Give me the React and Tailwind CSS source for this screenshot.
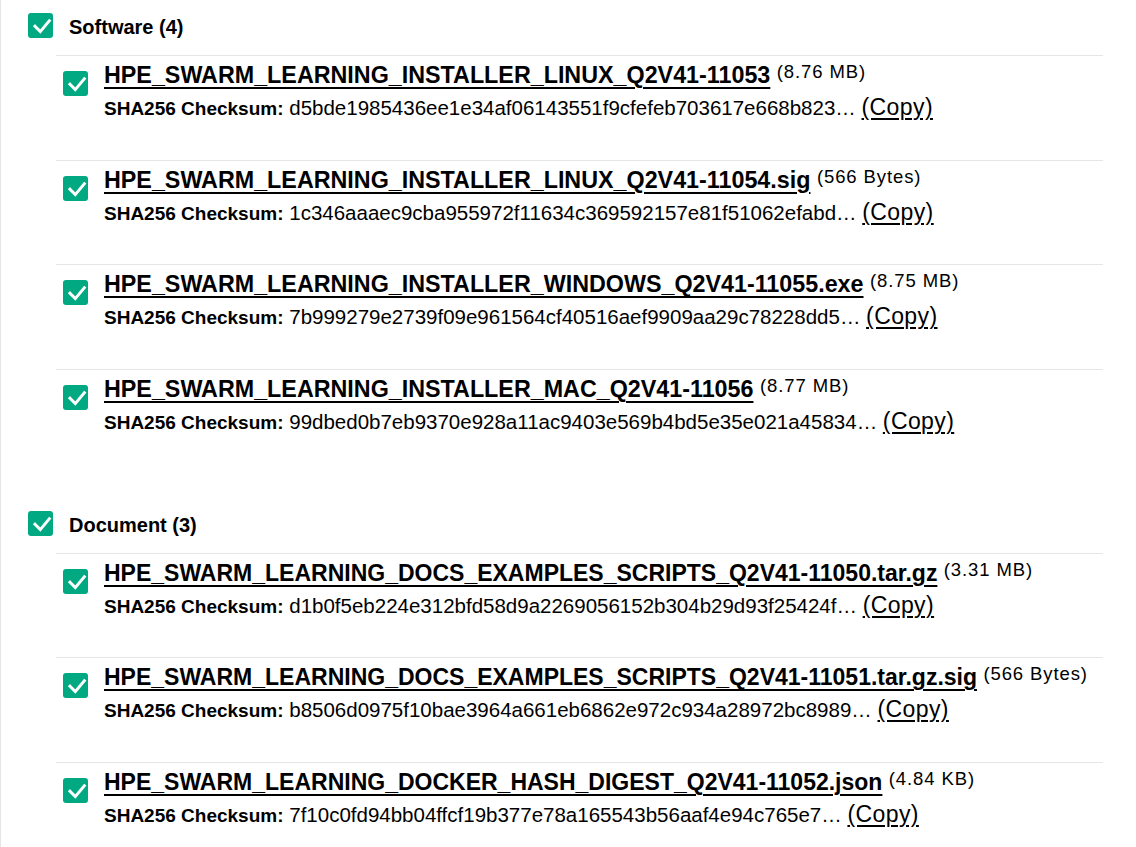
import React from 'react';

const groups = [
  {
    title: 'Software (4)',
    nameSize: 'text-[23.3px]',
    files: [
      { name: 'HPE_SWARM_LEARNING_INSTALLER_LINUX_Q2V41-11053', size: '8.76 MB', sha: 'd5bde1985436ee1e34af06143551f9cfefeb703617e668b823' },
      { name: 'HPE_SWARM_LEARNING_INSTALLER_LINUX_Q2V41-11054.sig', size: '566 Bytes', sha: '1c346aaaec9cba955972f11634c369592157e81f51062efabd' },
      { name: 'HPE_SWARM_LEARNING_INSTALLER_WINDOWS_Q2V41-11055.exe', size: '8.75 MB', sha: '7b999279e2739f09e961564cf40516aef9909aa29c78228dd5' },
      { name: 'HPE_SWARM_LEARNING_INSTALLER_MAC_Q2V41-11056', size: '8.77 MB', sha: '99dbed0b7eb9370e928a11ac9403e569b4bd5e35e021a45834' },
    ],
  },
  {
    title: 'Document (3)',
    nameSize: 'text-[23px]',
    files: [
      { name: 'HPE_SWARM_LEARNING_DOCS_EXAMPLES_SCRIPTS_Q2V41-11050.tar.gz', size: '3.31 MB', sha: 'd1b0f5eb224e312bfd58d9a2269056152b304b29d93f25424f' },
      { name: 'HPE_SWARM_LEARNING_DOCS_EXAMPLES_SCRIPTS_Q2V41-11051.tar.gz.sig', size: '566 Bytes', sha: 'b8506d0975f10bae3964a661eb6862e972c934a28972bc8989' },
      { name: 'HPE_SWARM_LEARNING_DOCKER_HASH_DIGEST_Q2V41-11052.json', size: '4.84 KB', sha: '7f10c0fd94bb04ffcf19b377e78a165543b56aaf4e94c765e7' },
    ],
  },
];

// green checked box
const CheckBox = ({ className = '' }) => (
  <span className={`flex h-[25px] w-[25px] shrink-0 items-center justify-center rounded-[3px] bg-[#01a982] ${className}`}>
    <svg width="25" height="25" viewBox="0 0 25 25" fill="none">
      <path d="M7 13.2 L12.3 18.6 L21.3 7.8" stroke="white" strokeWidth="3" strokeLinecap="square" strokeLinejoin="miter" />
    </svg>
  </span>
);

const FileRow = ({ file, nameSize }) => (
  <div className="flex items-start border-t border-[#e6e6e6] pt-[4px] pb-[39.67px] pl-[7px]">
    <CheckBox className="mt-[11px]" />
    <div className="ml-[16px]">
      <div className={`h-[30px] whitespace-nowrap leading-[30px] ${nameSize}`}>
        <a href="#" className="font-bold text-black underline decoration-2 underline-offset-[4px]">
          {file.name}
        </a>{' '}
        <span className="relative top-[2px] align-top text-[18.5px] leading-[20px] tracking-[0.9px] text-black">({file.size})</span>
      </div>
      <div className="mt-[4px] h-[26px] whitespace-nowrap text-[20.5px] leading-[26px] text-black">
        <span className="text-[19px] font-bold">SHA256 Checksum:</span> {file.sha}…{' '}
        <a href="#" className="text-[23px] tracking-[0.4px] underline decoration-[1.5px] underline-offset-[3px]">
          (Copy)
        </a>
      </div>
    </div>
  </div>
);

const Group = ({ group, first }) => (
  <section className={first ? '' : 'mt-[24px]'}>
    <div className="flex h-[55px] items-start pt-[13px] pl-[27px]">
      <CheckBox />
      <h2 className="ml-[16px] mt-[2px] text-[20px] font-bold leading-[25px] text-black">{group.title}</h2>
    </div>
    <div className="ml-[55px] w-[1047px]">
      {group.files.map((f) => (
        <FileRow key={f.name} file={f} nameSize={group.nameSize} />
      ))}
    </div>
  </section>
);

export default function App() {
  return (
    <div className="min-h-screen border-l border-[#e6e6e6] bg-white font-['Liberation_Sans',Arial,sans-serif]">
      {groups.map((g, i) => (
        <Group key={g.title} group={g} first={i === 0} />
      ))}
    </div>
  );
}
